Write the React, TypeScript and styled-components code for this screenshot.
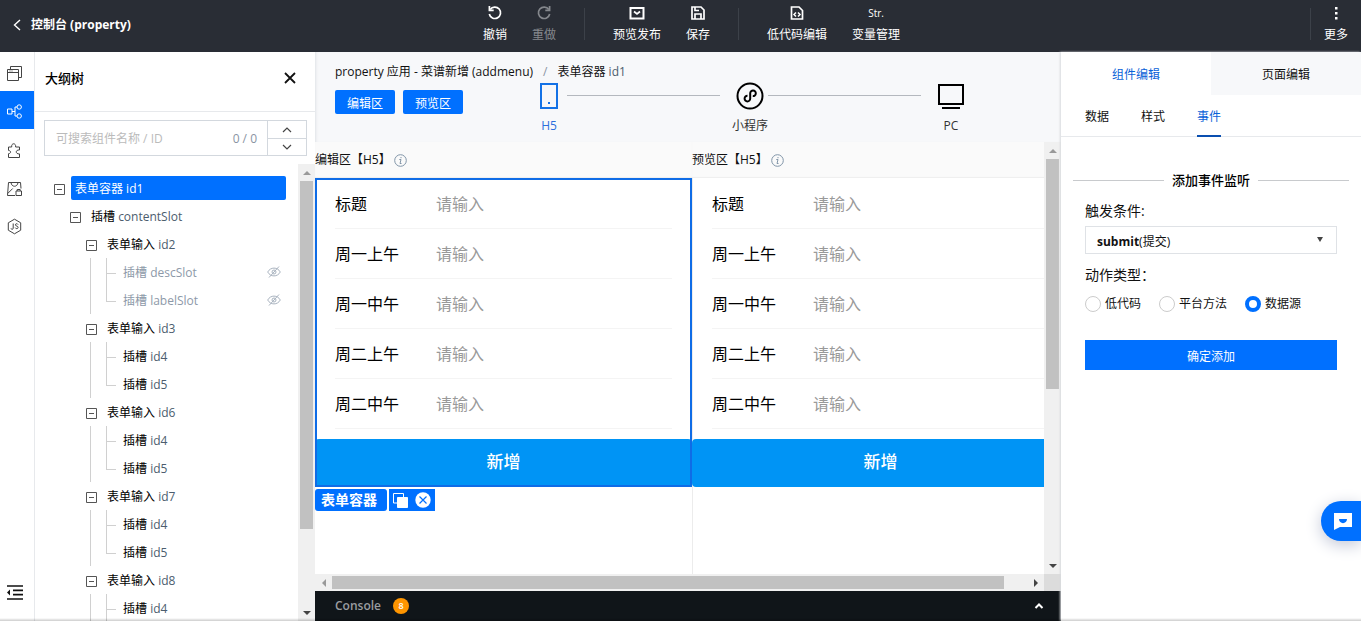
import React, { useState } from 'react';
import styled, { createGlobalStyle, css } from 'styled-components';

const BLUE = '#0070ff';
const FONT = '"Open Sans", "Noto Sans CJK SC", sans-serif';

const GlobalStyle = createGlobalStyle`
  *, *::before, *::after { box-sizing: border-box; }
  body {
    margin: 0;
    overflow: hidden;
    background: #fff;
    color: #111;
    font: 12px/20px ${FONT};
  }
  button, input, select { font: inherit; color: inherit; }
  button { border: 0; padding: 0; background: none; cursor: pointer; }
  ul { list-style: none; margin: 0; padding: 0; }
  h1, h2, h3, p, fieldset, legend { margin: 0; padding: 0; border: 0; font: inherit; }
  svg { display: block; flex: none; }
`;

const Page = styled.div`
  display: flex;
  flex-direction: column;
  height: 100vh;
  min-width: 1100px;
`;

/* ---------- header ---------- */

const Header = styled.header`
  flex: none;
  display: grid;
  grid-template-columns: 1fr auto 1fr;
  height: 52px;
  padding: 0 13px;
  background: #292d35;
  color: #fff;
`;

const BackLink = styled.a`
  display: flex;
  align-items: center;
  gap: 10px;
  padding-bottom: 2px;
  color: #fff;
  font-weight: 700;
  text-decoration: none;
`;

const Toolbar = styled.div`
  display: flex;
  gap: 25px;
  margin-left: 22px;
`;

const ToolSeparator = styled.span`
  width: 1px;
  height: 32px;
  margin: 8px 3px 0;
  background: #3c4149;
`;

const ToolButton = styled.button<{ $muted?: boolean }>`
  display: flex;
  flex-direction: column;
  align-items: center;
  gap: 4px;
  padding: 5px 0 7px;
  color: ${p => (p.$muted ? '#85888d' : '#fff')};
`;

const ToolGlyph = styled.span`
  display: flex;
  align-items: center;
  height: 16px;
  font-size: 10px;
`;

const MoreArea = styled.div`
  display: flex;
  justify-content: flex-end;
  gap: 10px;
`;

/* ---------- left side ---------- */

const Body = styled.div`
  flex: 1;
  display: flex;
  min-height: 0;
`;

const Rail = styled.nav`
  flex: none;
  display: flex;
  flex-direction: column;
  width: 35px;
  padding: 1px 0 10px;
  border-right: 1px solid #e7e9ec;
`;

const RailButton = styled.button<{ $active?: boolean; $last?: boolean }>`
  display: flex;
  align-items: center;
  height: 38px;
  padding: 2px 0 0 6px;
  background: ${p => (p.$active ? BLUE : 'transparent')};
  color: ${p => (p.$active ? '#fff' : '#444')};
  ${p => p.$active && css`margin-bottom: 1px;`}
  ${p => p.$last && css`margin-top: auto; color: #111;`}
`;

const Outline = styled.aside`
  flex: none;
  display: flex;
  flex-direction: column;
  width: 280px;
`;

const OutlineHead = styled.div`
  display: flex;
  align-items: center;
  justify-content: space-between;
  height: 60px;
  padding: 0 19px 8px 10px;
  border-bottom: 1px solid #e7e9ec;
`;

const OutlineTitle = styled.h2`
  font-size: 13px;
  font-weight: 500;
  color: #000;
`;

const SearchBox = styled.div`
  display: flex;
  height: 36px;
  margin: 8px 8px 8px 9px;
  border: 1px solid #d3d8de;
`;

const SearchInput = styled.input`
  flex: 1;
  min-width: 0;
  padding: 2px 0 0 11px;
  border: 0;
  outline: 0;
  background: none;
  &::placeholder { color: #bbb; opacity: 1; }
`;

const SearchCount = styled.span`
  padding: 8px 10px 0;
  color: #8a94a3;
`;

const SearchSteps = styled.div`
  display: grid;
  grid-template-rows: 1fr 1fr;
  width: 39px;
  border-left: 1px solid #d3d8de;
`;

const StepButton = styled.button`
  display: flex;
  align-items: center;
  justify-content: center;
  color: #444;
  & + & { border-top: 1px solid #d3d8de; }
`;

const TreeArea = styled.div`
  flex: 1;
  display: flex;
  min-height: 0;
`;

const TreeView = styled.div`
  flex: 1;
  overflow: hidden;
  padding: 10px 12px 0 0;
`;

const TreeRow = styled.div<{ $depth: number }>`
  display: flex;
  align-items: center;
  gap: 6px;
  height: 28px;
  padding-left: ${p => 19 + p.$depth * 16}px;
`;

const Toggle = styled.button`
  display: flex;
  padding-top: 2px;
  color: #555;
`;

const NodeName = styled.span<{ $selected?: boolean; $muted?: boolean }>`
  flex: 1;
  height: 24px;
  padding: 1px 0 0 4px;
  border-radius: 2px;
  line-height: 24px;
  color: ${p => (p.$muted ? '#8d99a8' : '#000')};
  ${p => p.$selected && css`background: ${BLUE}; color: #fff;`}
`;

const NodeId = styled.span<{ $plain?: boolean }>`
  color: ${p => (p.$plain ? 'inherit' : '#4c5d6e')};
`;

const SlotList = styled.ul`
  margin-left: 55px;
  border-left: 1px solid #d0d0d0;
`;

const SlotItem = styled.li`
  position: relative;
  display: flex;
  align-items: center;
  height: 28px;
  padding: 0 5px 0 28px;
  color: #a9b3bf;
  &::before {
    content: '';
    position: absolute;
    left: 15px;
    top: 0;
    width: 10px;
    height: 16px;
    border: solid #d0d0d0;
    border-width: 0 0 1px 1px;
  }
  &:not(:last-child)::after {
    content: '';
    position: absolute;
    left: 15px;
    top: 0;
    bottom: 0;
    border-left: 1px solid #d0d0d0;
  }
`;

/* ---------- scroll bars ---------- */

const Bar = styled.div<{ $row?: boolean }>`
  flex: none;
  display: flex;
  flex-direction: ${p => (p.$row ? 'row' : 'column')};
  ${p => (p.$row ? 'height: 17px;' : 'width: 17px;')}
  background: #f0f0f0;
`;

const BarEnd = styled.span`
  flex: none;
  display: flex;
  align-items: center;
  justify-content: center;
  width: 17px;
  height: 17px;
`;

const Thumb = styled.span<{ $size: number; $row?: boolean }>`
  flex: ${p => p.$size} 0 0;
  margin: ${p => (p.$row ? '2px 0' : '0 2px')};
  background: #c1c1c1;
`;

const BarRest = styled.span<{ $size: number }>`
  flex: ${p => p.$size} 0 0;
`;

const BarCorner = styled.span`
  width: 17px;
  background: #dcdcdc;
`;

/* ---------- center ---------- */

const Center = styled.main`
  flex: 1;
  display: flex;
  flex-direction: column;
  min-width: 0;
  background: #f7f8fa;
`;

const CenterTop = styled.section`
  flex: none;
  height: 90px;
  padding: 10px 92px 0 20px;
  box-shadow: inset 3px 0 3px -2px #dfe2e6;
`;

const Crumbs = styled.p`
  display: flex;
  gap: 10px;
  height: 20px;
  white-space: nowrap;
`;

const CrumbSlash = styled.span`
  color: #8a94a3;
`;

const DeviceRow = styled.div`
  display: flex;
  gap: 8px;
`;

const AreaButton = styled.button`
  width: 60px;
  height: 24px;
  margin-top: 8px;
  padding-top: 3px;
  border-radius: 2px;
  background: ${BLUE};
  color: #fff;
`;

const Devices = styled.div`
  flex: 1;
  display: flex;
  margin-left: 60px;
`;

const Device = styled.button<{ $active?: boolean }>`
  display: flex;
  flex-direction: column;
  align-items: center;
  gap: 6px;
  width: 36px;
  color: ${p => (p.$active ? '#1472e6' : '#000')};
  white-space: nowrap;
`;

const DeviceLabel = styled.span<{ $active?: boolean }>`
  color: ${p => (p.$active ? '#2a6fdc' : '#333')};
`;

const DeviceLine = styled.span`
  flex: 1;
  height: 1px;
  margin: 13px 12px 0 0;
  background: #b4b8be;
`;

const DeviceGlyph = styled.span`
  display: flex;
  align-items: center;
  height: 28px;
`;

const CanvasArea = styled.section`
  flex: 1;
  display: flex;
  min-height: 0;
`;

const Canvas = styled.div`
  flex: 1;
  display: flex;
  overflow: hidden;
  background: #fff;
`;

const Column = styled.div`
  flex: none;
  display: flex;
  flex-direction: column;
  width: 377px;
`;

const ColumnHead = styled.div`
  display: flex;
  align-items: center;
  gap: 3px;
  height: 36px;
  background: #fafafa;
  color: #111;
  box-shadow: inset 0 -1px 1px #eee;
`;

const Phone = styled.div<{ $bordered?: boolean }>`
  flex: 1;
  box-shadow: ${p => (p.$bordered ? 'inset 1px 0 #ececec' : 'none')};
`;

const Form = styled.form<{ $selected?: boolean }>`
  position: relative;
  padding-top: 1px;
  ${p => p.$selected && css`
    &::after {
      content: '';
      position: absolute;
      inset: 0;
      border: 2px solid #0f6ce6;
      pointer-events: none;
    }
  `}
`;

const Field = styled.label`
  display: flex;
  align-items: center;
  height: 50px;
  margin: 0 20px;
  border-bottom: 1px solid #f4f4f4;
  color: #000;
  font-size: 16px;
`;

const FieldName = styled.span`
  width: 101px;
`;

const FieldInput = styled.input`
  flex: 1;
  min-width: 0;
  padding: 0;
  border: 0;
  outline: 0;
  background: none;
  &::placeholder { color: #999; opacity: 1; }
`;

const AddButton = styled.button`
  width: 100%;
  height: 48px;
  margin-top: 10px;
  padding-bottom: 2px;
  border-radius: 4px;
  background: #0094f5;
  color: #fff;
  font-size: 17px;
  font-weight: 500;
`;

const TagRow = styled.div`
  display: flex;
  gap: 2px;
  height: 22px;
  margin-top: 2px;
`;

const Tag = styled.span`
  width: 72px;
  padding-left: 6px;
  border-radius: 3px;
  background: ${BLUE};
  color: #fff;
  font-size: 14px;
  font-weight: 700;
  line-height: 22px;
`;

const TagTools = styled.div`
  display: flex;
  align-items: center;
  gap: 7px;
  padding: 0 4px;
  background: ${BLUE};
`;

const TagTool = styled.button`
  color: #fff;
`;

const ConsoleBar = styled.footer`
  flex: none;
  display: flex;
  align-items: center;
  gap: 12px;
  height: 30px;
  padding: 0 17px 0 20px;
  background: #101519;
  color: #9b9da0;
  font-weight: 600;
`;

const Badge = styled.span`
  width: 16px;
  height: 16px;
  border-radius: 8px;
  background: #ff9500;
  color: #fff;
  font-size: 9px;
  line-height: 16px;
  text-align: center;
`;

const ConsoleToggle = styled.button`
  margin-left: auto;
  color: #fff;
`;

/* ---------- right side ---------- */

const Inspector = styled.aside`
  flex: none;
  width: 300px;
  box-shadow: -1px 0 2px #d8dade;
  z-index: 1;
`;

const Tabs = styled.div`
  display: grid;
  grid-template-columns: 1fr 1fr;
  height: 43px;
`;

const Tab = styled.button<{ $active?: boolean }>`
  padding-top: 2px;
  background: ${p => (p.$active ? '#fff' : '#f7f8fa')};
  color: ${p => (p.$active ? '#0a62d8' : '#111')};
`;

const SubTabs = styled.div`
  display: flex;
  gap: 32px;
  height: 42px;
  padding: 0 24px;
  border-bottom: 1px solid #e7e9ec;
`;

const SubTab = styled.button<{ $active?: boolean }>`
  height: 42px;
  padding-top: 4px;
  border-bottom: 2px solid ${p => (p.$active ? '#0a4fb0' : 'transparent')};
  color: ${p => (p.$active ? '#0a62d8' : '#111')};
`;

const SectionTitle = styled.h3`
  display: flex;
  align-items: center;
  gap: 8px;
  margin: 33px 12px 0;
  font-size: 13px;
  font-weight: 500;
  color: #000;
  &::before, &::after {
    content: '';
    flex: 1;
    height: 1px;
    background: #c8cacd;
  }
`;

const EventForm = styled.form`
  display: flex;
  flex-direction: column;
  padding: 11px 24px;
`;

const FormLabel = styled.label`
  font-size: 14px;
`;

const SelectBox = styled.div`
  position: relative;
  display: flex;
  align-items: center;
  justify-content: space-between;
  height: 28px;
  margin: 5px 0 11px;
  padding: 3px 13px 0 11px;
  border: 1px solid #dfe2e6;
`;

const SelectArrow = styled.svg`
  margin-bottom: 4px;
`;

const EventSelect = styled.select`
  position: absolute;
  inset: 0;
  width: 100%;
  opacity: 0;
`;

const RadioGroup = styled.fieldset`
  display: flex;
  flex-wrap: wrap;
  column-gap: 18px;
`;

const RadioLegend = styled.legend`
  margin-bottom: 9px;
  font-size: 14px;
`;

const RadioLabel = styled.label`
  display: flex;
  align-items: center;
  gap: 4px;
`;

const Radio = styled.input`
  appearance: none;
  width: 16px;
  height: 16px;
  margin: 0;
  border: 1px solid #ccc;
  border-radius: 50%;
  &:checked { border: 4px solid ${BLUE}; }
`;

const Confirm = styled.button`
  height: 30px;
  margin-top: 26px;
  padding-top: 3px;
  background: ${BLUE};
  color: #fff;
`;

const ChatButton = styled.button`
  position: fixed;
  right: 0;
  bottom: 80px;
  z-index: 2;
  display: flex;
  align-items: center;
  width: 40px;
  height: 40px;
  padding-left: 13px;
  border-radius: 20px 0 0 20px;
  background: ${BLUE};
  box-shadow: 0 4px 16px #c3c8d8;
`;

const BottomEdge = styled.div`
  position: fixed;
  inset: auto 0 0 0;
  z-index: 3;
  height: 3px;
  background: linear-gradient(transparent, #0003);
  pointer-events: none;
`;

/* ---------- icons ---------- */

type IconProps = { w?: number; h?: number; box?: string; sw?: number; children: React.ReactNode };

const Icon = ({ w = 16, h = w, box = `0 0 ${w} ${h}`, sw = 1, children }: IconProps) => (
  <svg width={w} height={h} viewBox={box} fill="none" stroke="currentColor" strokeWidth={sw} aria-hidden="true">
    {children}
  </svg>
);

const Chevron = ({ d, sw = 1.2 }: { d: string; sw?: number }) => (
  <Icon w={10} h={6} sw={sw}><path d={d} /></Icon>
);
const UP = 'M1 5l4-4 4 4';
const DOWN = 'M1 1l4 4 4-4';

const BackIcon = () => <Icon w={8} h={12} sw={1.4}><path d="M7 1L1.500 6 7 11" /></Icon>;
const UndoIcon = () => (
  <Icon sw={1.7}><path d="M3.200 4.500A5.700 5.700 0 1 1 2.300 9" /><path d="M2.400 1v4.300h4.300" /></Icon>
);
const RedoIcon = () => (
  <Icon sw={1.7}><path d="M12.800 4.500A5.700 5.700 0 1 0 13.700 9" /><path d="M13.600 1v4.300H9.300" /></Icon>
);
const PublishIcon = () => (
  <Icon sw={2}><path d="M1.500 3h13v10.500h-13z" /><path d="M5 6.500L8 9l3-2.500" strokeWidth="1.700" /></Icon>
);
const SaveIcon = () => (
  <Icon sw={1.7}><path d="M2 2h9l3 3v9H2z" /><path d="M5 14V9h6v5M5 2v3.500h4" /></Icon>
);
const CodeIcon = () => (
  <Icon sw={1.7}><path d="M2.500 2h7.500l3.500 3.500V14h-11z" /><path d="M7 7.500L5 9.500l2 2M9 7.500l2 2-2 2" strokeWidth="1.500" /></Icon>
);
const MoreIcon = () => (
  <Icon><path d="M7 2h2.500v2.500H7zM7 7h2.500v2.500H7zM7 12h2.500v2.500H7z" fill="currentColor" stroke="none" /></Icon>
);

const WindowsIcon = () => (
  <Icon w={17}><path d="M1.500 4.500h11v11h-11zM1.500 7.500h11M4.500 4.500v-3h11v11h-3M3.500 6h1M5.500 6h1" /></Icon>
);
const NodesIcon = () => (
  <Icon w={17}><path d="M1.500 6h4.500v5H1.500zM6 8.500h3M11 4H9v9h2" /><circle cx="13.200" cy="4" r="2.200" /><circle cx="13.200" cy="13" r="2.200" /></Icon>
);
const PuzzleIcon = () => (
  <Icon w={17}><path d="M2.500 5h3.200c-.7-4.300 4.600-4.300 3.900 0h3.900v3c-4.300-.5-4.300 4.300 0 3.900v3.600h-11v-3.800c2.800-.3 2.800-3 0-3.300z" /></Icon>
);
const BoxIcon = () => (
  <Icon w={17}><path d="M9 15.500H1.500l1-13h12L15 8.500M5 2.500c.5 5 6.500 5 7 0M1.700 13.500l5-5" /><path d="M10 11h5.500v4.500H10zM11.200 11V9.500h3V11" /></Icon>
);
const JsIcon = () => (
  <Icon w={17}><path d="M8.500 1.200l6.200 3.600v7.400l-6.200 3.600-6.200-3.600V4.800z" /><path d="M7.200 5.500v4.700c0 1.500-2 1.500-2.200.2M12 6.500c-.5-1.200-2.700-1-2.600.4.100 1.500 2.800.8 2.700 2.600-.1 1.500-2.500 1.500-2.900.1" /></Icon>
);
const CollapseIcon = () => (
  <Icon w={18} sw={1.700}><path d="M1 2h16M7 6.300h10M7 10.600h10M1 15h16" /><path d="M4 5.500v6L1 8.500z" fill="currentColor" stroke="none" /></Icon>
);
const CloseIcon = () => <Icon w={12} sw={1.8}><path d="M1 1l10 10M11 1L1 11" /></Icon>;
const MinusBox = () => <Icon w={11}><path d="M.500.500h10v10H.500zM3 5.500h5" /></Icon>;
const HiddenIcon = () => (
  <Icon w={14} h={12}><path d="M.700 6C3.500.800 10.500.800 13.300 6 10.500 11.200 3.500 11.200.700 6zM2 11.500L12 .500" /><circle cx="7" cy="6" r="2" /></Icon>
);
const InfoIcon = () => (
  <svg width="13" height="13" viewBox="0 0 13 13" fill="none" stroke="#8195a8" aria-hidden="true">
    <circle cx="6.500" cy="6.500" r="5.800" /><path d="M5.300 5.500h1.700l-1 4h1.500M7 3v1.200" />
  </svg>
);
const PhoneIcon = () => (
  <Icon w={18} h={26} sw={2}><path d="M1 1h16v24H1z" /><path d="M8 20h2" /></Icon>
);
const MiniAppIcon = () => (
  <Icon w={28} sw={2}>
    <circle cx="14" cy="14" r="12.500" />
    <path d="M11.500 13.800a2.800 2.800 0 1 0 2.700 2.800v-5.400a2.800 2.800 0 1 1 2.600 2.900" />
  </Icon>
);
const PcIcon = () => <Icon w={26} h={26} sw={2}><path d="M1 2h24v19H1zM4 25h18" /></Icon>;
const CopyIcon = () => (
  <Icon w={15}><path d="M4 10H.500V.500h10V4" /><path d="M4.500 4.500h10v10h-10z" fill="currentColor" /></Icon>
);
const RemoveIcon = () => (
  <svg width="16" height="16" viewBox="0 0 16 16" aria-hidden="true">
    <circle cx="8" cy="8" r="7.700" fill="#fff" />
    <path d="M4.500 4.500l7 7M11.500 4.500l-7 7" stroke={BLUE} strokeWidth="1.200" />
  </svg>
);
const ChatIcon = () => (
  <svg width="19" height="18" viewBox="0 0 19 18" aria-hidden="true">
    <path d="M0 1h18v14H6l-6 3z" fill="#fff" /><path d="M5 7h8c0 5.500-8 5.500-8 0z" fill={BLUE} />
  </svg>
);

const ARROWS = { up: 'M0 4h8L4 0z', down: 'M0 0h8L4 4z', left: 'M4 0v8L0 4z', right: 'M0 0v8l4-4z' };

const Arrow = ({ dir, faint }: { dir: keyof typeof ARROWS; faint?: boolean }) => {
  const flat = dir === 'up' || dir === 'down';
  return (
    <BarEnd>
      <svg width={flat ? 8 : 4} height={flat ? 4 : 8} aria-hidden="true">
        <path d={ARROWS[dir]} fill={faint ? '#999' : '#444'} />
      </svg>
    </BarEnd>
  );
};

const ScrollBar = ({ thumb, rest, row }: { thumb: number; rest: number; row?: boolean }) => (
  <Bar $row={row} aria-hidden="true">
    <Arrow dir={row ? 'left' : 'up'} faint />
    <Thumb $size={thumb} $row={row} />
    <BarRest $size={rest} />
    <Arrow dir={row ? 'right' : 'down'} />
  </Bar>
);

const BottomBar = styled.div`
  flex: none;
  display: flex;
  & > :first-child { flex: 1; }
`;

/* ---------- data ---------- */

const groups = [
  { id: 'id2', slots: ['descSlot', 'labelSlot'], hidden: true },
  { id: 'id3', slots: ['id4', 'id5'] },
  { id: 'id6', slots: ['id4', 'id5'] },
  { id: 'id7', slots: ['id4', 'id5'] },
  { id: 'id8', slots: ['id4', 'id5'] },
];

const fields = ['标题', '周一上午', '周一中午', '周二上午', '周二中午'];
const actions = ['低代码', '平台方法', '数据源'];

const Tool = ({ icon, label, muted }: { icon: React.ReactNode; label: string; muted?: boolean }) => (
  <ToolButton type="button" $muted={muted}>
    <ToolGlyph>{icon}</ToolGlyph>
    {label}
  </ToolButton>
);

const MenuForm = ({ selected }: { selected?: boolean }) => (
  <Form $selected={selected} onSubmit={e => e.preventDefault()}>
    {fields.map(name => (
      <Field key={name}>
        <FieldName>{name}</FieldName>
        <FieldInput placeholder="请输入" />
      </Field>
    ))}
    <AddButton>新增</AddButton>
  </Form>
);

export default function App() {
  const [action, setAction] = useState('数据源');

  return (
    <Page>
      <GlobalStyle />
      <Header>
        <BackLink href="#"><BackIcon />控制台 (property)</BackLink>
        <Toolbar>
          <Tool icon={<UndoIcon />} label="撤销" />
          <Tool icon={<RedoIcon />} label="重做" muted />
          <ToolSeparator />
          <Tool icon={<PublishIcon />} label="预览发布" />
          <Tool icon={<SaveIcon />} label="保存" />
          <ToolSeparator />
          <Tool icon={<CodeIcon />} label="低代码编辑" />
          <Tool icon="Str." label="变量管理" />
        </Toolbar>
        <MoreArea>
          <ToolSeparator />
          <Tool icon={<MoreIcon />} label="更多" />
        </MoreArea>
      </Header>

      <Body>
        <Rail>
          <RailButton type="button" aria-label="页面"><WindowsIcon /></RailButton>
          <RailButton type="button" aria-label="大纲树" $active><NodesIcon /></RailButton>
          <RailButton type="button" aria-label="组件"><PuzzleIcon /></RailButton>
          <RailButton type="button" aria-label="素材"><BoxIcon /></RailButton>
          <RailButton type="button" aria-label="脚本"><JsIcon /></RailButton>
          <RailButton type="button" aria-label="收起" $last><CollapseIcon /></RailButton>
        </Rail>

        <Outline>
          <OutlineHead>
            <OutlineTitle>大纲树</OutlineTitle>
            <button type="button" aria-label="关闭"><CloseIcon /></button>
          </OutlineHead>
          <SearchBox>
            <SearchInput aria-label="搜索组件" placeholder="可搜索组件名称 / ID" />
            <SearchCount>0 / 0</SearchCount>
            <SearchSteps>
              <StepButton type="button" aria-label="上一个"><Chevron d={UP} /></StepButton>
              <StepButton type="button" aria-label="下一个"><Chevron d={DOWN} /></StepButton>
            </SearchSteps>
          </SearchBox>
          <TreeArea>
            <TreeView>
              <TreeRow $depth={0}>
                <Toggle type="button" aria-label="折叠"><MinusBox /></Toggle>
                <NodeName $selected>表单容器 id1</NodeName>
              </TreeRow>
              <TreeRow $depth={1}>
                <Toggle type="button" aria-label="折叠"><MinusBox /></Toggle>
                <NodeName>插槽 <NodeId>contentSlot</NodeId></NodeName>
              </TreeRow>
              {groups.map(g => (
                <React.Fragment key={g.id}>
                  <TreeRow $depth={2}>
                    <Toggle type="button" aria-label="折叠"><MinusBox /></Toggle>
                    <NodeName>表单输入 <NodeId>{g.id}</NodeId></NodeName>
                  </TreeRow>
                  <SlotList>
                    {g.slots.map(s => (
                      <SlotItem key={s}>
                        <NodeName $muted={g.hidden}>插槽 <NodeId $plain={g.hidden}>{s}</NodeId></NodeName>
                        {g.hidden && <HiddenIcon />}
                      </SlotItem>
                    ))}
                  </SlotList>
                </React.Fragment>
              ))}
            </TreeView>
            <ScrollBar thumb={348} rest={75} />
          </TreeArea>
        </Outline>

        <Center>
          <CenterTop>
            <Crumbs>
              <span>property 应用 - 菜谱新增 (addmenu)</span>
              <CrumbSlash>/</CrumbSlash>
              <span>表单容器 <NodeId>id1</NodeId></span>
            </Crumbs>
            <DeviceRow>
              <AreaButton type="button">编辑区</AreaButton>
              <AreaButton type="button">预览区</AreaButton>
              <Devices>
                <Device type="button" $active>
                  <DeviceGlyph><PhoneIcon /></DeviceGlyph>
                  <DeviceLabel $active>H5</DeviceLabel>
                </Device>
                <DeviceLine />
                <Device type="button">
                  <DeviceGlyph><MiniAppIcon /></DeviceGlyph>
                  <DeviceLabel>小程序</DeviceLabel>
                </Device>
                <DeviceLine />
                <Device type="button">
                  <DeviceGlyph><PcIcon /></DeviceGlyph>
                  <DeviceLabel>PC</DeviceLabel>
                </Device>
              </Devices>
            </DeviceRow>
          </CenterTop>

          <CanvasArea>
            <Canvas>
              <Column>
                <ColumnHead>编辑区【H5】<InfoIcon /></ColumnHead>
                <Phone>
                  <MenuForm selected />
                  <TagRow>
                    <Tag>表单容器</Tag>
                    <TagTools>
                      <TagTool type="button" aria-label="复制"><CopyIcon /></TagTool>
                      <TagTool type="button" aria-label="删除"><RemoveIcon /></TagTool>
                    </TagTools>
                  </TagRow>
                </Phone>
              </Column>
              <Column>
                <ColumnHead>预览区【H5】<InfoIcon /></ColumnHead>
                <Phone $bordered><MenuForm /></Phone>
              </Column>
            </Canvas>
            <ScrollBar thumb={230} rest={168} />
          </CanvasArea>
          <BottomBar>
            <ScrollBar row thumb={672} rest={23} />
            <BarCorner />
          </BottomBar>
          <ConsoleBar>
            Console <Badge>8</Badge>
            <ConsoleToggle type="button" aria-label="展开"><Chevron d="M1.500 5L5 1.500 8.500 5" sw={2} /></ConsoleToggle>
          </ConsoleBar>
        </Center>

        <Inspector>
          <Tabs>
            <Tab type="button" $active>组件编辑</Tab>
            <Tab type="button">页面编辑</Tab>
          </Tabs>
          <SubTabs>
            <SubTab type="button">数据</SubTab>
            <SubTab type="button">样式</SubTab>
            <SubTab type="button" $active>事件</SubTab>
          </SubTabs>
          <SectionTitle>添加事件监听</SectionTitle>
          <EventForm onSubmit={e => e.preventDefault()}>
            <FormLabel htmlFor="event">触发条件:</FormLabel>
            <SelectBox>
              <span><b>submit</b>(提交)</span>
              <SelectArrow width="6" height="5" aria-hidden="true"><path d="M0 0h6L3 5z" fill="#444" /></SelectArrow>
              <EventSelect id="event"><option>submit(提交)</option></EventSelect>
            </SelectBox>
            <RadioGroup>
              <RadioLegend>动作类型：</RadioLegend>
              {actions.map(a => (
                <RadioLabel key={a}>
                  <Radio type="radio" name="action" checked={action === a} onChange={() => setAction(a)} />
                  {a}
                </RadioLabel>
              ))}
            </RadioGroup>
            <Confirm>确定添加</Confirm>
          </EventForm>
        </Inspector>
      </Body>

      <ChatButton type="button" aria-label="客服"><ChatIcon /></ChatButton>
      <BottomEdge />
    </Page>
  );
}
